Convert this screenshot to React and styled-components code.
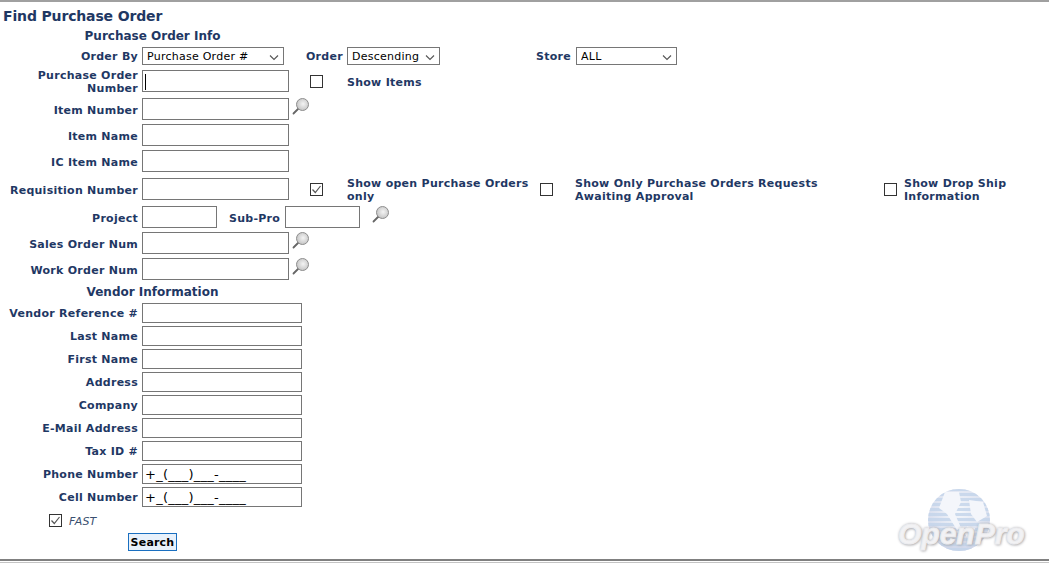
import React from "react";
import styled, { createGlobalStyle } from "styled-components";

const Global = createGlobalStyle`
  html, body { margin: 0; padding: 0; background: #fff; }
  body { font-family: "DejaVu Sans", Verdana, sans-serif; overflow: hidden; }
`;

const NAVY = "#1f3864";

const Page = styled.div`
  position: relative;
  width: 1049px;
  height: 563px;
  box-sizing: border-box;
  border-top: 2px solid #a0a0a0;
  overflow: hidden;
`;
const Title = styled.h1`
  margin: 6px 0 0 3px;
  font-size: 14px;
  line-height: 17px;
  font-weight: 700;
  letter-spacing: -0.15px;
  color: ${NAVY};
`;
const SectionTitle = styled.h2`
  margin: ${p => p.$mt}px 0 0 0;
  width: 305px;
  text-align: center;
  font-size: 12px;
  line-height: 15px;
  font-weight: 700;
  color: ${NAVY};
`;
const Label = styled.label`
  flex: none;
  width: 138px;
  margin-right: 4px;
  text-align: right;
  font-size: 11px;
  line-height: 13px;
  font-weight: 700;
  letter-spacing: 0.27px;
  color: ${NAVY};
`;
const CheckLabel = styled.span`
  flex: none;
  width: ${p => p.$w}px;
  margin-left: ${p => p.$ml}px;
  font-size: 11px;
  line-height: 13px;
  font-weight: 700;
  letter-spacing: 0.27px;
  color: ${NAVY};
`;
const InlineLabel = styled(CheckLabel)`
  width: auto;
`;
const Row = styled.div`
  display: flex;
  align-items: center;
  margin-top: ${p => p.$mt}px;
  height: ${p => p.$h}px;
`;
const TallRow = styled(Row)`
  height: 22px;
  ${Label}, ${CheckLabel} {
    padding-top: 2px;
  }
`;
const TextBox = styled.input`
  flex: none;
  box-sizing: border-box;
  width: ${p => p.$w}px;
  height: ${p => p.$h}px;
  border: 1px solid #767676;
  padding: 0 2px;
  background: #fff;
  font-family: "DejaVu Sans", Verdana, sans-serif;
  font-size: 11px;
  color: #000;
  outline: none;
`;
const MaskBox = styled(TextBox)`
  font-size: 13px;
  letter-spacing: 0.25px;
`;
const CaretBox = styled(TextBox)`
  background: linear-gradient(#000, #000) no-repeat 2px 3px / 1px 16px, #fff;
`;
const SelectWrap = styled.div`
  position: relative;
  flex: none;
  width: ${p => p.$w}px;
  height: 18px;
`;
const Select = styled.select`
  display: block;
  appearance: none;
  box-sizing: border-box;
  width: 100%;
  height: 100%;
  border: 1px solid #767676;
  border-radius: 0;
  padding: 0 0 0 4px;
  background: #fff;
  font-family: "DejaVu Sans", Verdana, sans-serif;
  font-size: 11px;
  letter-spacing: 0.25px;
  color: #000;
  outline: none;
`;
const Chevron = styled.svg`
  position: absolute;
  right: 5px;
  top: 7px;
  width: 10px;
  height: 7px;
  pointer-events: none;
`;
const Box = styled.span`
  flex: none;
  box-sizing: border-box;
  display: block;
  width: 13px;
  height: 13px;
  margin-left: ${p => p.$ml}px;
  border: 1px solid #333;
  background: #fff;
`;
const FastRow = styled(Row)`
  padding-left: 49px;
`;
const FastText = styled.span`
  margin-left: 7px;
  margin-top: 2px;
  font-size: 11px;
  letter-spacing: 0.1px;
  font-style: italic;
  color: #3a4f70;
`;
const SearchButton = styled.button`
  display: block;
  box-sizing: border-box;
  width: 49px;
  height: 18px;
  margin: 6px 0 0 128px;
  padding: 0;
  border: 1px solid #1a6fc0;
  background: #e8f1fb;
  font-family: "DejaVu Sans", Verdana, sans-serif;
  font-size: 11px;
  font-weight: 700;
  letter-spacing: 0.2px;
  color: #000;
`;
const LookupIcon = styled.svg`
  flex: none;
  width: 18px;
  height: 18px;
  margin-left: ${p => p.$ml}px;
  align-self: flex-start;
`;
const Footer = styled.div`
  position: absolute;
  left: 0;
  right: 0;
  top: 557px;
  height: 4px;
  border-top: 2px solid #808080;
  border-bottom: 1px solid #c4c4c4;
  box-sizing: border-box;
`;
const Logo = styled.div`
  position: absolute;
  left: 898px;
  top: 484px;
  width: 130px;
  height: 68px;
`;
const LogoGlobe = styled.svg`
  position: absolute;
  left: 27px;
  top: 2px;
  width: 68px;
  height: 66px;
  filter: blur(0.7px);
`;
const LogoText = styled.span`
  position: absolute;
  left: 0;
  top: 30px;
  font-family: "Liberation Sans", Arial, sans-serif;
  font-size: 30px;
  line-height: 36px;
  font-weight: 700;
  font-style: italic;
  letter-spacing: 0;
  color: #f2f2f4;
  -webkit-text-stroke: 1px #ececef;
  text-shadow: 0 0 3px #a4a4a8, 1px 1px 3px #a8a8ac;
`;

const Check = () => (
  <svg width="11" height="11" viewBox="0 0 11 11" style={{ display: "block" }}>
    <path d="M1.5 5.5 L4.3 8.5 L9.5 2" fill="none" stroke="#555" strokeWidth="1.2" />
  </svg>
);
const CheckBox = ({ ml = 0, checked }) => <Box $ml={ml}>{checked && <Check />}</Box>;

const Lookup = ({ ml }) => (
  <LookupIcon $ml={ml} viewBox="0 0 18 18">
    <defs>
      <radialGradient id="lens" cx="0.55" cy="0.45" r="0.65">
        <stop offset="0" stopColor="#f4f4f4" />
        <stop offset="1" stopColor="#bcbcbc" />
      </radialGradient>
    </defs>
    <path d="M1.5 15.5 L6.5 10.5" stroke="#666" strokeWidth="1.8" strokeLinecap="round" />
    <circle cx="10.5" cy="6.5" r="6" fill="url(#lens)" stroke="#8e8e8e" strokeWidth="1" />
  </LookupIcon>
);

const Dropdown = ({ w, value }) => (
  <SelectWrap $w={w}>
    <Select defaultValue={value}><option>{value}</option></Select>
    <Chevron viewBox="0 0 10 7">
      <path d="M1 1.5 L5 5.5 L9 1.5" fill="none" stroke="#555" strokeWidth="1.1" />
    </Chevron>
  </SelectWrap>
);

const vendorFields = [
  "Vendor Reference #", "Last Name", "First Name", "Address", "Company", "E-Mail Address", "Tax ID #",
];
const phoneFields = ["Phone Number", "Cell Number"];

export default function App() {
  return (
    <Page>
      <Global />
      <Title>Find Purchase Order</Title>
      <SectionTitle $mt={4}>Purchase Order Info</SectionTitle>
      <Row $mt={3} $h={18}>
        <Label>Order By</Label>
        <Dropdown w={142} value="Purchase Order #" />
        <CheckLabel $ml={22} $w={41}>Order</CheckLabel>
        <Dropdown w={93} value="Descending" />
        <CheckLabel $ml={96} $w={40}>Store</CheckLabel>
        <Dropdown w={101} value="ALL" />
      </Row>
      <TallRow $mt={5}>
        <Label>Purchase Order Number</Label>
        <CaretBox $w={147} $h={22} />
        <CheckBox ml={21} />
        <InlineLabel $ml={24}>Show Items</InlineLabel>
      </TallRow>
      <TallRow $mt={6}>
        <Label>Item Number</Label>
        <TextBox $w={147} $h={22} />
        <Lookup ml={3} />
      </TallRow>
      <TallRow $mt={4}>
        <Label>Item Name</Label>
        <TextBox $w={147} $h={22} />
      </TallRow>
      <TallRow $mt={4}>
        <Label>IC Item Name</Label>
        <TextBox $w={147} $h={22} />
      </TallRow>
      <TallRow $mt={6}>
        <Label>Requisition Number</Label>
        <TextBox $w={147} $h={22} />
        <CheckBox ml={21} checked />
        <CheckLabel $ml={24} $w={193}>Show open Purchase Orders only</CheckLabel>
        <CheckBox ml={0} />
        <CheckLabel $ml={22} $w={296}>Show Only Purchase Orders Requests Awaiting Approval</CheckLabel>
        <CheckBox ml={13} />
        <CheckLabel $ml={7} $w={124}>Show Drop Ship Information</CheckLabel>
      </TallRow>
      <TallRow $mt={6}>
        <Label>Project</Label>
        <TextBox $w={75} $h={22} />
        <CheckLabel $ml={12} $w={56}>Sub-Pro</CheckLabel>
        <TextBox $w={75} $h={22} />
        <Lookup ml={12} />
      </TallRow>
      <TallRow $mt={4}>
        <Label>Sales Order Num</Label>
        <TextBox $w={147} $h={22} />
        <Lookup ml={3} />
      </TallRow>
      <TallRow $mt={4}>
        <Label>Work Order Num</Label>
        <TextBox $w={147} $h={22} />
        <Lookup ml={3} />
      </TallRow>
      <SectionTitle $mt={5}>Vendor Information</SectionTitle>
      {vendorFields.map(l => (
        <Row key={l} $mt={3} $h={20}>
          <Label>{l}</Label>
          <TextBox $w={160} $h={20} />
        </Row>
      ))}
      {phoneFields.map(l => (
        <Row key={l} $mt={3} $h={20}>
          <Label>{l}</Label>
          <MaskBox $w={160} $h={20} readOnly value="+_(___)___-____" />
        </Row>
      ))}
      <FastRow $mt={7} $h={13}>
        <CheckBox checked />
        <FastText>FAST</FastText>
      </FastRow>
      <SearchButton>Search</SearchButton>
      <Logo>
        <LogoGlobe viewBox="0 0 68 66">
          <defs>
            <radialGradient id="globe" cx="0.5" cy="0.35" r="0.7">
              <stop offset="0" stopColor="#f6f8fc" />
              <stop offset="1" stopColor="#ccd4e8" />
            </radialGradient>
            <pattern id="lines" width="4" height="5" patternUnits="userSpaceOnUse">
              <rect width="4" height="3" fill="#c3d4ea" />
            </pattern>
            <clipPath id="gc"><circle cx="34" cy="32" r="31" /></clipPath>
          </defs>
          <circle cx="34" cy="32" r="31" fill="url(#globe)" />
          <g clipPath="url(#gc)">
            <rect x="0" y="0" width="68" height="66" fill="url(#lines)" opacity="0.8" />
            <path d="M20 4 L34 4 L36 14 L30 26 L36 40 L32 42 L22 26 L14 20 Z" fill="#f4f6fb" />
            <path d="M44 12 L58 14 L62 28 L52 34 L46 26 Z" fill="#f4f6fb" />
            <path d="M42 38 L50 40 L46 56 L40 46 Z" fill="#f4f6fb" />
          </g>
        </LogoGlobe>
        <LogoText>OpenPro</LogoText>
      </Logo>
      <Footer />
    </Page>
  );
}
